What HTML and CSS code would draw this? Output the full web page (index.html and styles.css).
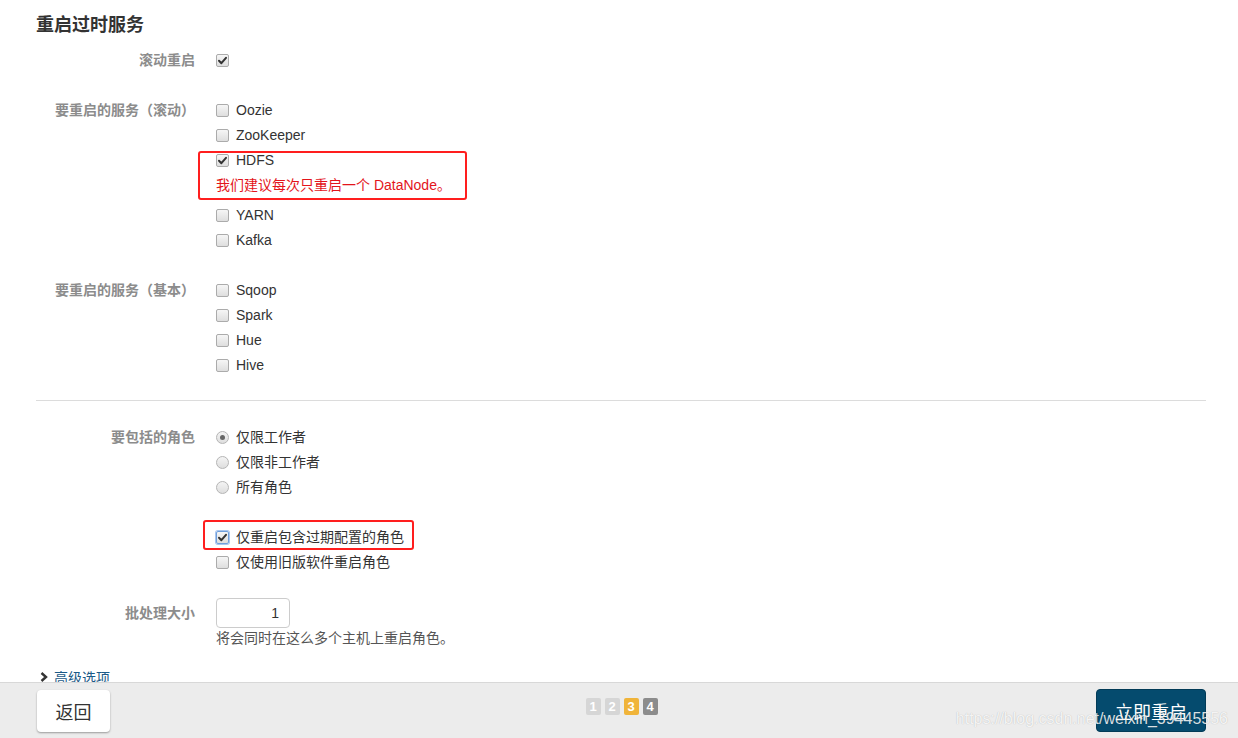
FILE: index.html
```html
<!DOCTYPE html>
<html lang="zh">
<head>
<meta charset="utf-8">
<title>重启过时服务</title>
<link rel="stylesheet" href="styles.css">
</head>
<body>
<div class="page">
  <h2 class="title">重启过时服务</h2>

  <div class="group">
    <div class="label">滚动重启</div>
    <div class="controls">
      <div class="opt"><span class="cb"><svg viewBox="0 0 11 11" class="tick"><path d="M2 5.8 L4.4 8.2 L9 2.8"/></svg></span></div>
    </div>
  </div>

  <div class="group">
    <div class="label">要重启的服务（滚动）</div>
    <div class="controls">
      <div class="opt"><span class="cb"></span>Oozie</div>
      <div class="opt"><span class="cb"></span>ZooKeeper</div>
      <div class="opt"><span class="cb"><svg viewBox="0 0 11 11" class="tick"><path d="M2 5.8 L4.4 8.2 L9 2.8"/></svg></span>HDFS</div>
      <div class="help-red">我们建议每次只重启一个 DataNode。</div>
      <div class="opt"><span class="cb"></span>YARN</div>
      <div class="opt"><span class="cb"></span>Kafka</div>
    </div>
  </div>

  <div class="group last">
    <div class="label">要重启的服务（基本）</div>
    <div class="controls">
      <div class="opt"><span class="cb"></span>Sqoop</div>
      <div class="opt"><span class="cb"></span>Spark</div>
      <div class="opt"><span class="cb"></span>Hue</div>
      <div class="opt"><span class="cb"></span>Hive</div>
    </div>
  </div>

  <hr class="divider">

  <div class="group">
    <div class="label">要包括的角色</div>
    <div class="controls">
      <div class="opt"><span class="rb on"></span>仅限工作者</div>
      <div class="opt"><span class="rb"></span>仅限非工作者</div>
      <div class="opt"><span class="rb"></span>所有角色</div>
    </div>
  </div>

  <div class="group tight">
    <div class="label"></div>
    <div class="controls">
      <div class="opt"><span class="cb focus"><svg viewBox="0 0 11 11" class="tick"><path d="M2 5.8 L4.4 8.2 L9 2.8"/></svg></span>仅重启包含过期配置的角色</div>
      <div class="opt"><span class="cb"></span>仅使用旧版软件重启角色</div>
    </div>
  </div>

  <div class="group batch">
    <div class="label">批处理大小</div>
    <div class="controls">
      <div class="num-input">1</div>
      <div class="help">将会同时在这么多个主机上重启角色。</div>
    </div>
  </div>

  <div class="advanced">
    <svg class="chev" viewBox="0 0 8 10"><path d="M1.5 1 L6 5 L1.5 9"/></svg>
    <span>高级选项</span>
  </div>

  <div class="mark mark-1"></div>
  <div class="mark mark-2"></div>
</div>

<div class="footer">
  <div class="f-left"><button class="btn-back">返回</button></div>
  <div class="steps">
    <span class="step done">1</span>
    <span class="step done">2</span>
    <span class="step current">3</span>
    <span class="step next">4</span>
  </div>
  <div class="f-right"><button class="btn-primary">立即重启</button></div>
  <div class="watermark">https://blog.csdn.net/weixin_39445556</div>
</div>
</body>
</html>
```

FILE: styles.css
```css
html, body {
  margin: 0;
  padding: 0;
}
body {
  font-family: "Liberation Sans", "Noto Sans CJK SC", sans-serif;
  font-size: 14px;
  color: #333;
  background: #fff;
  overflow: hidden;
}
.page {
  position: relative;
  padding: 12px 32px 0 36px;
}
.title {
  margin: 0 0 10px;
  font-size: 18px;
  line-height: 26px;
  font-weight: bold;
  color: #333;
}
.group {
  display: grid;
  grid-template-columns: 159px 1fr;
  column-gap: 21px;
  margin-bottom: 25px;
}
.group.last {
  margin-bottom: 0;
}
.group.tight {
  margin-bottom: 23px;
}
.group.batch {
  margin-bottom: 0;
}
.label {
  text-align: right;
  font-weight: bold;
  color: #8c8c8c;
  line-height: 25px;
  white-space: nowrap;
}
.opt {
  display: flex;
  align-items: center;
  height: 25px;
  line-height: 25px;
  white-space: nowrap;
}
.cb {
  width: 13px;
  height: 13px;
  box-sizing: border-box;
  border: 1px solid #ababab;
  border-radius: 2px;
  background: linear-gradient(#f6f6f6, #dedede);
  margin-right: 7px;
  display: inline-flex;
  align-items: center;
  justify-content: center;
  flex: none;
}
.cb.focus {
  border-color: #6f9fdc;
  box-shadow: 0 0 0 1px #a9c6ef;
}
.tick {
  width: 11px;
  height: 11px;
}
.tick path {
  fill: none;
  stroke: #333;
  stroke-width: 2;
  stroke-linecap: round;
  stroke-linejoin: round;
}
.rb {
  width: 13px;
  height: 13px;
  box-sizing: border-box;
  border: 1px solid #b5b5b5;
  border-radius: 50%;
  background: linear-gradient(#f4f4f4, #dedede);
  margin-right: 7px;
  display: inline-flex;
  align-items: center;
  justify-content: center;
  flex: none;
}
.rb.on::after {
  content: "";
  width: 5px;
  height: 5px;
  border-radius: 50%;
  background: #666;
}
.help-red {
  color: #e3141b;
  line-height: 25px;
  margin-bottom: 5px;
  white-space: nowrap;
}
.divider {
  border: 0;
  border-top: 1px solid #dcdcdc;
  height: 0;
  margin: 22px 0 24px;
}
.batch .label {
  line-height: 30px;
}
.num-input {
  width: 74px;
  height: 30px;
  box-sizing: border-box;
  border: 1px solid #cccccc;
  border-radius: 4px;
  text-align: right;
  padding-right: 10px;
  line-height: 28px;
  color: #333;
  background: #fff;
}
.help {
  line-height: 20px;
  color: #555;
}
.advanced {
  display: flex;
  align-items: center;
  margin-top: 16px;
  height: 25px;
  color: #1b5a87;
}
.chev {
  width: 8px;
  height: 10px;
  margin-left: 4px;
  margin-right: 6px;
}
.chev path {
  fill: none;
  stroke: #333;
  stroke-width: 2.4;
}
.mark {
  position: absolute;
  box-sizing: border-box;
  border: 2px solid #ff1e1e;
  border-radius: 3px;
}
.mark-1 {
  left: 198px;
  top: 151px;
  width: 269px;
  height: 49px;
}
.mark-2 {
  left: 203px;
  top: 520px;
  width: 211px;
  height: 30px;
}
.footer {
  position: fixed;
  left: 0;
  right: 0;
  bottom: 0;
  box-sizing: border-box;
  height: 56px;
  background: #ececec;
  border-top: 1px solid #d8d8d8;
  display: grid;
  grid-template-columns: 1fr auto 1fr;
  align-items: start;
  padding: 7px 32px 0 37px;
}
.btn-back {
  width: 73px;
  height: 42px;
  border: 0;
  border-radius: 4px;
  background: #fff;
  box-shadow: 0 1px 2px rgba(0, 0, 0, 0.35);
  font-family: "Liberation Sans", "Noto Sans CJK SC", sans-serif;
  font-size: 18px;
  color: #333;
  padding: 0;
}
.steps {
  display: flex;
  gap: 4px;
  margin-top: 8px;
}
.step {
  width: 15px;
  height: 17px;
  border-radius: 2px;
  color: #fff;
  font-weight: bold;
  font-size: 13px;
  line-height: 17px;
  text-align: center;
}
.step.done {
  background: #d6d6d6;
}
.step.current {
  background: #f0b43a;
}
.step.next {
  background: #8c8c8c;
}
.f-right {
  justify-self: end;
}
.btn-primary {
  width: 110px;
  height: 43px;
  margin-top: -1px;
  border: 1px solid #023b57;
  border-radius: 4px;
  background: #054b6e;
  color: #fff;
  font-family: "Liberation Sans", "Noto Sans CJK SC", sans-serif;
  font-size: 18px;
  padding: 0;
}
.watermark {
  position: absolute;
  right: 10px;
  top: 26px;
  font-size: 16px;
  line-height: 20px;
  color: rgba(255, 255, 255, 0.85);
  text-shadow: 0 0 1px rgba(0, 0, 0, 0.25);
  pointer-events: none;
}
```
